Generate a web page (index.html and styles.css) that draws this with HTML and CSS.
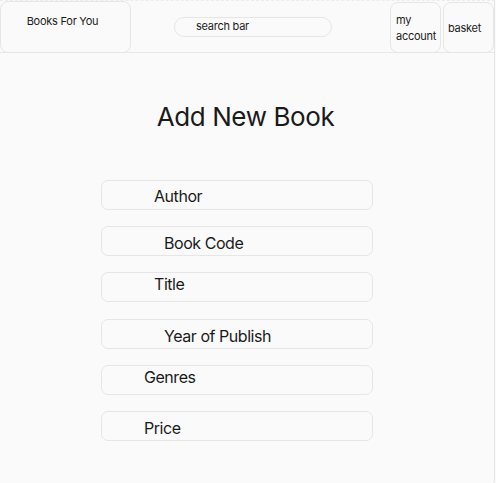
FILE: index.html
```html
<!DOCTYPE html>
<html lang="en">
<head>
<meta charset="utf-8">
<title>Add New Book</title>
<link rel="stylesheet" href="styles.css">
</head>
<body>
<div class="page">
  <header class="topbar">
    <div class="brand">Books For You</div>
    <div class="search">search bar</div>
    <div class="account">my<br>account</div>
    <div class="basket">basket</div>
  </header>
  <main class="content">
    <h1 class="title">Add New Book</h1>
    <div class="fields">
      <div class="field field--mid field--p4">Author</div>
      <div class="field field--far field--p5">Book Code</div>
      <div class="field field--mid field--p0">Title</div>
      <div class="field field--far field--p5">Year of Publish</div>
      <div class="field field--near field--p0">Genres</div>
      <div class="field field--near field--p5">Price</div>
    </div>
  </main>
</div>
</body>
</html>
```

FILE: styles.css
```css
* { box-sizing: border-box; }
html, body { margin: 0; padding: 0; }
body {
  background: #fafafa;
  font-family: Inter, "Noto Sans", sans-serif;
  color: #1a1a1a;
}
.page {
  width: 495px;
  height: 490px;
  border-right: 1px solid #e6e6e6;
  border-top: 1px dashed #ececec;
  border-bottom-right-radius: 10px;
  background: #fafafa;
}
.topbar {
  display: flex;
  align-items: flex-start;
  height: 52px;
  border-bottom: 1px solid #e8e8e8;
  font-size: 11px;
  letter-spacing: -0.25px;
}
.brand {
  width: 131px;
  height: 52px;
  border: 1px solid #e6e6e6;
  border-radius: 8px;
  text-align: center;
  padding: 11px 6px 0 0;
  line-height: 16px;
}
.search {
  margin-left: 43px;
  margin-top: 16px;
  width: 158px;
  height: 20px;
  border: 1px solid #e6e6e6;
  border-radius: 10px;
  padding-left: 21px;
  line-height: 14px;
  padding-top: 1px;
}
.account {
  margin-left: 58px;
  margin-top: 1px;
  width: 51px;
  height: 51px;
  border: 1px solid #e6e6e6;
  border-radius: 8px;
  padding: 9px 0 0 5px;
  line-height: 16px;
}
.basket {
  margin-left: 2px;
  margin-top: 1px;
  width: 51px;
  height: 51px;
  border: 1px solid #e6e6e6;
  border-radius: 8px;
  padding: 18px 0 0 4px;
  line-height: 15px;
}
.title {
  margin: 48px 0 0;
  padding-right: 3px;
  text-align: center;
  font-size: 26px;
  font-weight: 400;
  line-height: 32px;
  letter-spacing: -0.4px;
  color: #1a1a1a;
}
.fields {
  margin: 47px 0 0 101px;
  width: 272px;
  display: flex;
  flex-direction: column;
  gap: 16.2px;
}
.field {
  height: 30px;
  border: 1.5px solid #e6e6e6;
  border-radius: 7px;
  font-size: 16px;
  line-height: 20px;
  letter-spacing: -0.45px;
  color: #1a1a1a;
}
.field--near { padding-left: 42px; }
.field--mid { padding-left: 52px; }
.field--far { padding-left: 62px; }
.field--p0 { padding-top: 1px; }
.field--p4 { padding-top: 5px; }
.field--p5 { padding-top: 6px; }
```
